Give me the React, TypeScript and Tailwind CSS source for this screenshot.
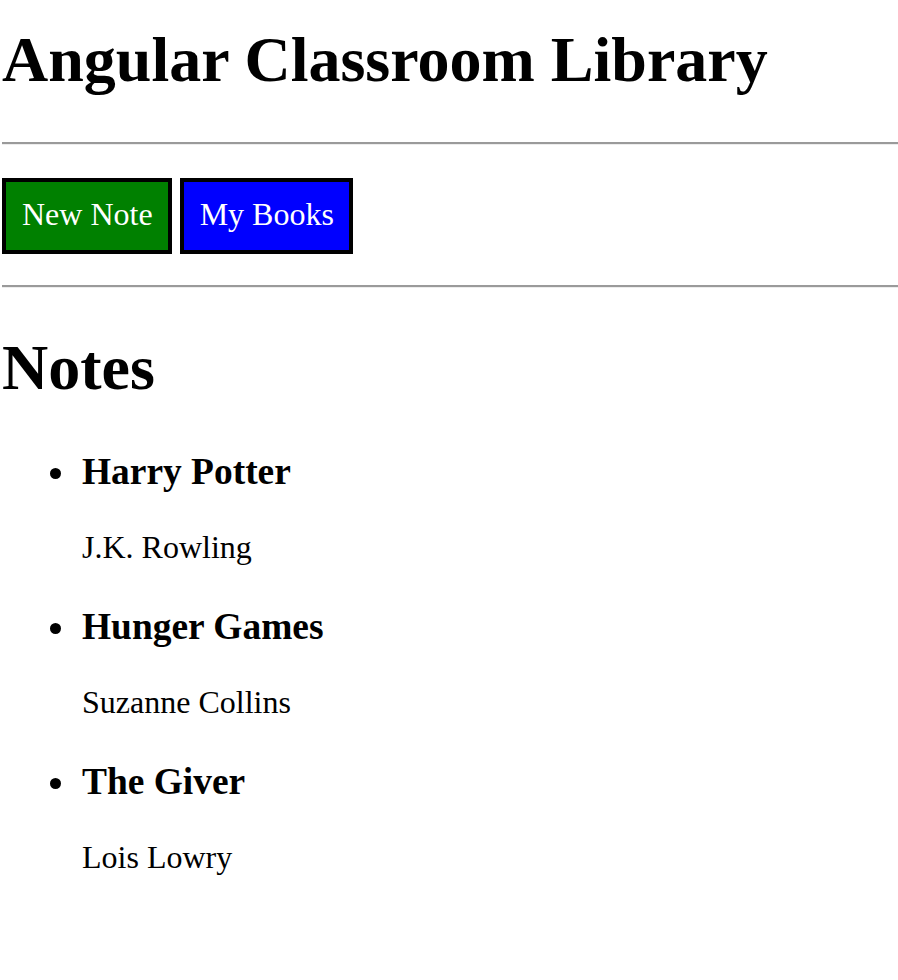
import React from 'react';

const notes = [
  { title: 'Harry Potter', author: 'J.K. Rowling' },
  { title: 'Hunger Games', author: 'Suzanne Collins' },
  { title: 'The Giver', author: 'Lois Lowry' },
];

function Rule({ className = '' }: { className?: string }) {
  return <div className={`border-t-2 border-b border-t-[#9a9a9a] border-b-[#ededed] ${className}`} />;
}

export default function App() {
  return (
    <div className="min-h-screen bg-white text-black font-['Liberation_Serif','Times_New_Roman',serif] pl-[2px] pt-[23px]">
      <h1 className="text-[64px] font-bold leading-[74px]">Angular Classroom Library</h1>

      <Rule className="mt-[45px]" />

      <div className="mt-[33px] flex gap-[8px]">
        <button className="border-4 border-black bg-[#008000] text-white text-[32px] leading-[37px] pl-[16px] pr-[15px] pt-[14px] pb-[17px]">
          New Note
        </button>
        <button className="border-4 border-black bg-[#0000ff] text-white text-[32px] leading-[37px] pl-[16px] pr-[15px] pt-[14px] pb-[17px]">
          My Books
        </button>
      </div>

      <Rule className="mt-[31px]" />

      <h1 className="mt-[43px] text-[64px] font-bold leading-[74px]">Notes</h1>

      <ul className="pl-[48px] text-[32px]">
        {notes.map((note, i) => (
          <li key={note.title} className={`flex ${i === 0 ? 'mt-[45px]' : 'mt-[39px]'}`}>
            <span className="mt-[18px] mr-[21px] h-[11px] w-[11px] shrink-0 rounded-full bg-black" />
            <div>
              <h3 className="text-[37.44px] font-bold leading-[43px]">{note.title}</h3>
              <p className="mt-[36px] text-[32px] leading-[37px]">{note.author}</p>
            </div>
          </li>
        ))}
      </ul>
    </div>
  );
}
